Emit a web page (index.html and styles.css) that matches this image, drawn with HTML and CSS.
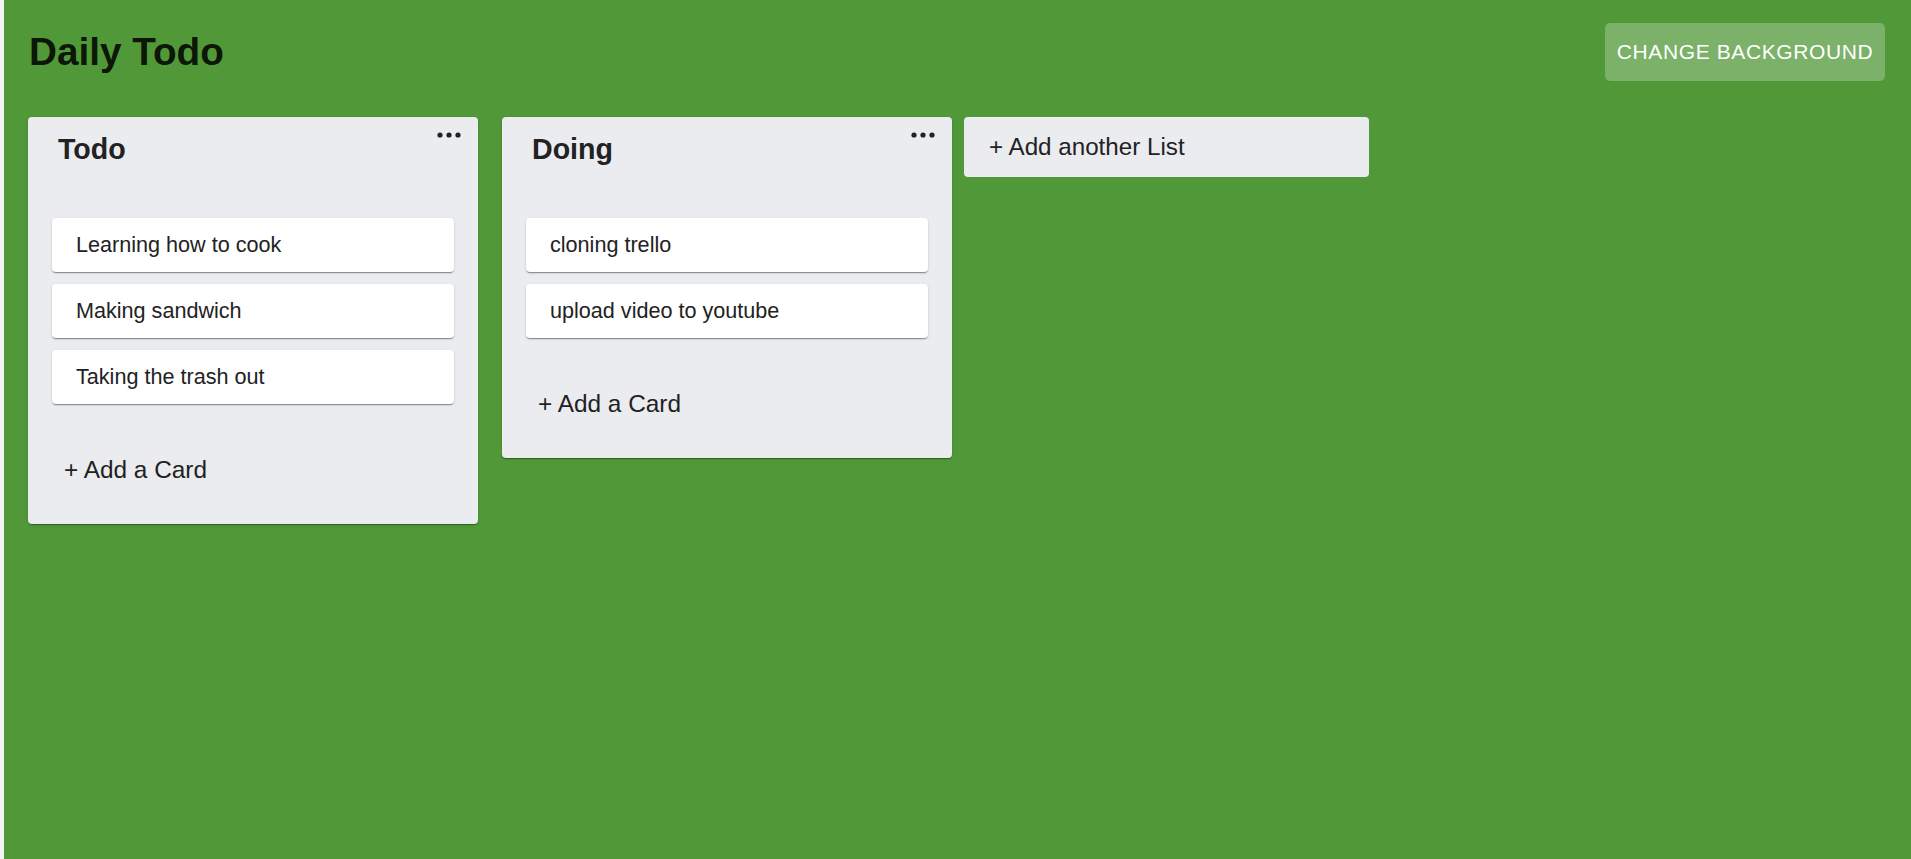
FILE: index.html
```html
<!DOCTYPE html>
<html lang="en">
<head>
<meta charset="utf-8">
<title>Daily Todo</title>
<link rel="stylesheet" href="styles.css">
</head>
<body>
<div class="app">
  <header class="header">
    <h1 class="board-title">Daily Todo</h1>
    <button class="bg-button">CHANGE BACKGROUND</button>
  </header>
  <main class="lists">
    <section class="list">
      <div class="list-head">
        <h2 class="list-title">Todo</h2>
        <button class="menu" aria-label="more">
          <svg width="24" height="6" viewBox="0 0 24 6"><circle cx="3" cy="3" r="2.6"/><circle cx="12" cy="3" r="2.6"/><circle cx="21" cy="3" r="2.6"/></svg>
        </button>
      </div>
      <div class="cards">
        <div class="card">Learning how to cook</div>
        <div class="card">Making sandwich</div>
        <div class="card">Taking the trash out</div>
      </div>
      <div class="add-card">+ Add a Card</div>
    </section>
    <section class="list">
      <div class="list-head">
        <h2 class="list-title">Doing</h2>
        <button class="menu" aria-label="more">
          <svg width="24" height="6" viewBox="0 0 24 6"><circle cx="3" cy="3" r="2.6"/><circle cx="12" cy="3" r="2.6"/><circle cx="21" cy="3" r="2.6"/></svg>
        </button>
      </div>
      <div class="cards">
        <div class="card">cloning trello</div>
        <div class="card">upload video to youtube</div>
      </div>
      <div class="add-card">+ Add a Card</div>
    </section>
    <div class="add-list">+ Add another List</div>
  </main>
</div>
</body>
</html>
```

FILE: styles.css
```css
html, body {
  margin: 0;
  padding: 0;
}
body {
  background: #f4f4f4;
  font-family: "Liberation Sans", Arial, Helvetica, sans-serif;
  color: rgba(0, 0, 0, 0.87);
}
.app {
  margin-left: 4px;
  min-height: 859px;
  background: #519839;
}
.header {
  display: flex;
  align-items: center;
  justify-content: space-between;
  padding: 23px 26px 0 25px;
}
.board-title {
  margin: 0;
  font-size: 38.7px;
  font-weight: bold;
  line-height: 44px;
  color: rgba(0, 0, 0, 0.87);
}
.bg-button {
  width: 280px;
  height: 58px;
  border: none;
  border-radius: 5px;
  background: rgba(255, 255, 255, 0.245);
  color: #fff;
  font-family: "Liberation Sans", Arial, sans-serif;
  font-size: 21px;
  letter-spacing: 0.6px;
  padding: 0;
  cursor: pointer;
}
.lists {
  display: flex;
  align-items: flex-start;
  padding: 36px 0 0 24px;
}
.list {
  position: relative;
  width: 450px;
  box-sizing: border-box;
  background: #ebecf0;
  border-radius: 4px;
  padding: 16px 24px 0;
  box-shadow: 0 2px 1px -1px rgba(0,0,0,0.2), 0 1px 1px 0 rgba(0,0,0,0.14), 0 1px 3px 0 rgba(0,0,0,0.12);
}
.list + .list {
  margin-left: 24px;
}
.list-head {
  height: 32px;
  margin-bottom: 53px;
  padding-left: 6px;
}
.list-title {
  margin: 0;
  font-size: 28.6px;
  line-height: 32px;
  font-weight: bold;
  color: #222;
}
.menu {
  position: absolute;
  top: 15px;
  right: 17px;
  border: none;
  background: none;
  padding: 0;
  width: 24px;
  height: 6px;
  display: flex;
}
.menu svg {
  fill: #222;
}
.cards {
  display: flex;
  flex-direction: column;
  gap: 12px;
}
.card {
  height: 54px;
  display: flex;
  align-items: center;
  padding: 0 24px;
  background: #fff;
  border-radius: 4px;
  font-size: 21.6px;
  color: #222;
  box-shadow: 0 2px 1px -1px rgba(0,0,0,0.25), 0 1px 1px 0 rgba(0,0,0,0.16), 0 1px 3px 0 rgba(0,0,0,0.12);
}
.add-card {
  margin-top: 52px;
  padding: 0 0 40px 12px;
  font-size: 24.4px;
  line-height: 28px;
  color: #222;
}
.add-list {
  margin-left: 12px;
  width: 405px;
  height: 60px;
  box-sizing: border-box;
  display: flex;
  align-items: center;
  padding-left: 25px;
  background: #ebecf0;
  border-radius: 4px;
  font-size: 24.2px;
  color: #222;
}
```
